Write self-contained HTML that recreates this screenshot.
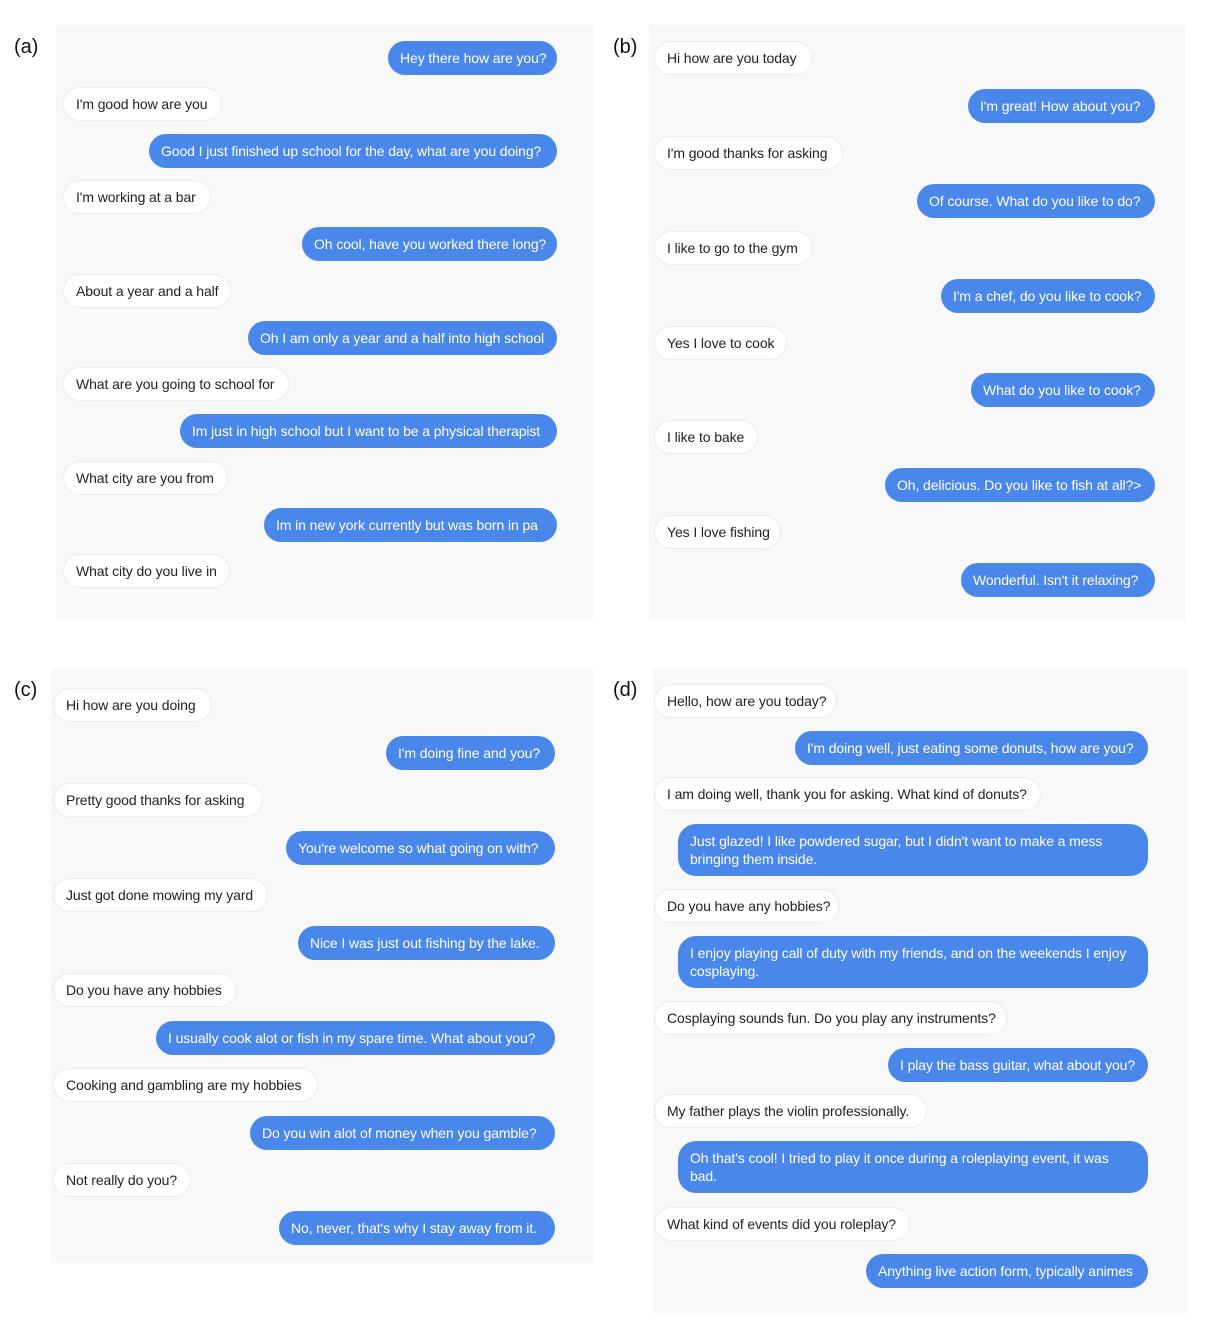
<!DOCTYPE html>
<html><head><meta charset="utf-8"><style>
body{margin:0;width:1213px;height:1327px;background:#fff;position:relative;font-family:"Liberation Sans",sans-serif;overflow:hidden}
.p{position:absolute;background:#f8f8f8}
.l{position:absolute;font-size:20px;color:#111}
.b{position:absolute;height:34px;border-radius:17px;box-sizing:border-box;padding:0 12px;font-size:14px;line-height:34px;white-space:nowrap;overflow:hidden;letter-spacing:-0.1px}
.w{background:#fff;border:1px solid #ebebeb;color:#222;line-height:32px}
.u{background:#4a87ea;color:#fff}
.m{height:52px;line-height:18px;white-space:nowrap;padding:8px 12px;border-radius:18px}
</style></head><body>
<div class="p" style="left:56px;top:25px;width:537px;height:596px"></div>
<div class="p" style="left:649px;top:25px;width:537px;height:596px"></div>
<div class="p" style="left:51px;top:668px;width:542px;height:595px"></div>
<div class="p" style="left:653px;top:668px;width:535px;height:645px"></div>
<div class="l" style="left:14px;top:36px">(a)</div>
<div class="l" style="left:613px;top:36px">(b)</div>
<div class="l" style="left:14px;top:679px">(c)</div>
<div class="l" style="left:613px;top:679px">(d)</div>

<div class="b u" style="left:388px;width:169px;top:41px">Hey there how are you?</div>
<div class="b w" style="left:63px;width:159px;top:87px">I'm good how are you</div>
<div class="b u" style="left:149px;width:408px;top:134px">Good I just finished up school for the day, what are you doing?</div>
<div class="b w" style="left:63px;width:148px;top:180px">I'm working at a bar</div>
<div class="b u" style="left:302px;width:255px;top:227px">Oh cool, have you worked there long?</div>
<div class="b w" style="left:63px;width:168px;top:274px">About a year and a half</div>
<div class="b u" style="left:248px;width:309px;top:321px">Oh I am only a year and a half into high school</div>
<div class="b w" style="left:63px;width:226px;top:367px">What are you going to school for</div>
<div class="b u" style="left:180px;width:377px;top:414px">Im just in high school but I want to be a physical therapist</div>
<div class="b w" style="left:63px;width:165px;top:461px">What city are you from</div>
<div class="b u" style="left:264px;width:293px;top:508px">Im in new york currently but was born in pa</div>
<div class="b w" style="left:63px;width:167px;top:554px">What city do you live in</div>

<div class="b w" style="left:654px;width:159px;top:41px">Hi how are you today</div>
<div class="b u" style="left:968px;width:187px;top:89px">I'm great! How about you?</div>
<div class="b w" style="left:654px;width:189px;top:136px">I'm good thanks for asking</div>
<div class="b u" style="left:917px;width:238px;top:184px">Of course. What do you like to do?</div>
<div class="b w" style="left:654px;width:159px;top:231px">I like to go to the gym</div>
<div class="b u" style="left:941px;width:214px;top:279px">I'm a chef, do you like to cook?</div>
<div class="b w" style="left:654px;width:133px;top:326px">Yes I love to cook</div>
<div class="b u" style="left:971px;width:184px;top:373px">What do you like to cook?</div>
<div class="b w" style="left:654px;width:104px;top:420px">I like to bake</div>
<div class="b u" style="left:885px;width:270px;top:468px">Oh, delicious. Do you like to fish at all?&gt;</div>
<div class="b w" style="left:654px;width:127px;top:515px">Yes I love fishing</div>
<div class="b u" style="left:961px;width:194px;top:563px">Wonderful. Isn't it relaxing?</div>

<div class="b w" style="left:53px;width:159px;top:688px">Hi how are you doing</div>
<div class="b u" style="left:386px;width:169px;top:736px">I'm doing fine and you?</div>
<div class="b w" style="left:53px;width:210px;top:783px">Pretty good thanks for asking</div>
<div class="b u" style="left:286px;width:269px;top:831px">You're welcome so what going on with?</div>
<div class="b w" style="left:53px;width:215px;top:878px">Just got done mowing my yard</div>
<div class="b u" style="left:298px;width:257px;top:926px">Nice I was just out fishing by the lake.</div>
<div class="b w" style="left:53px;width:184px;top:973px">Do you have any hobbies</div>
<div class="b u" style="left:156px;width:399px;top:1021px">I usually cook alot or fish in my spare time. What about you?</div>
<div class="b w" style="left:53px;width:265px;top:1068px">Cooking and gambling are my hobbies</div>
<div class="b u" style="left:250px;width:305px;top:1116px">Do you win alot of money when you gamble?</div>
<div class="b w" style="left:53px;width:138px;top:1163px">Not really do you?</div>
<div class="b u" style="left:279px;width:276px;top:1211px">No, never, that's why I stay away from it.</div>

<div class="b w" style="left:654px;width:183px;top:684px">Hello, how are you today?</div>
<div class="b u" style="left:795px;width:353px;top:731px">I'm doing well, just eating some donuts, how are you?</div>
<div class="b w" style="left:654px;width:387px;top:777px">I am doing well, thank you for asking. What kind of donuts?</div>
<div class="b u m" style="left:678px;width:470px;top:824px">Just glazed! I like powdered sugar, but I didn't want to make a mess<br>bringing them inside.</div>
<div class="b w" style="left:654px;width:185px;top:889px">Do you have any hobbies?</div>
<div class="b u m" style="left:678px;width:470px;top:936px">I enjoy playing call of duty with my friends, and on the weekends I enjoy<br>cosplaying.</div>
<div class="b w" style="left:654px;width:353px;top:1001px">Cosplaying sounds fun. Do you play any instruments?</div>
<div class="b u" style="left:888px;width:260px;top:1048px">I play the bass guitar, what about you?</div>
<div class="b w" style="left:654px;width:273px;top:1094px">My father plays the violin professionally.</div>
<div class="b u m" style="left:678px;width:470px;top:1141px">Oh that's cool! I tried to play it once during a roleplaying event, it was<br>bad.</div>
<div class="b w" style="left:654px;width:256px;top:1207px">What kind of events did you roleplay?</div>
<div class="b u" style="left:866px;width:282px;top:1254px">Anything live action form, typically animes</div>
</body></html>
